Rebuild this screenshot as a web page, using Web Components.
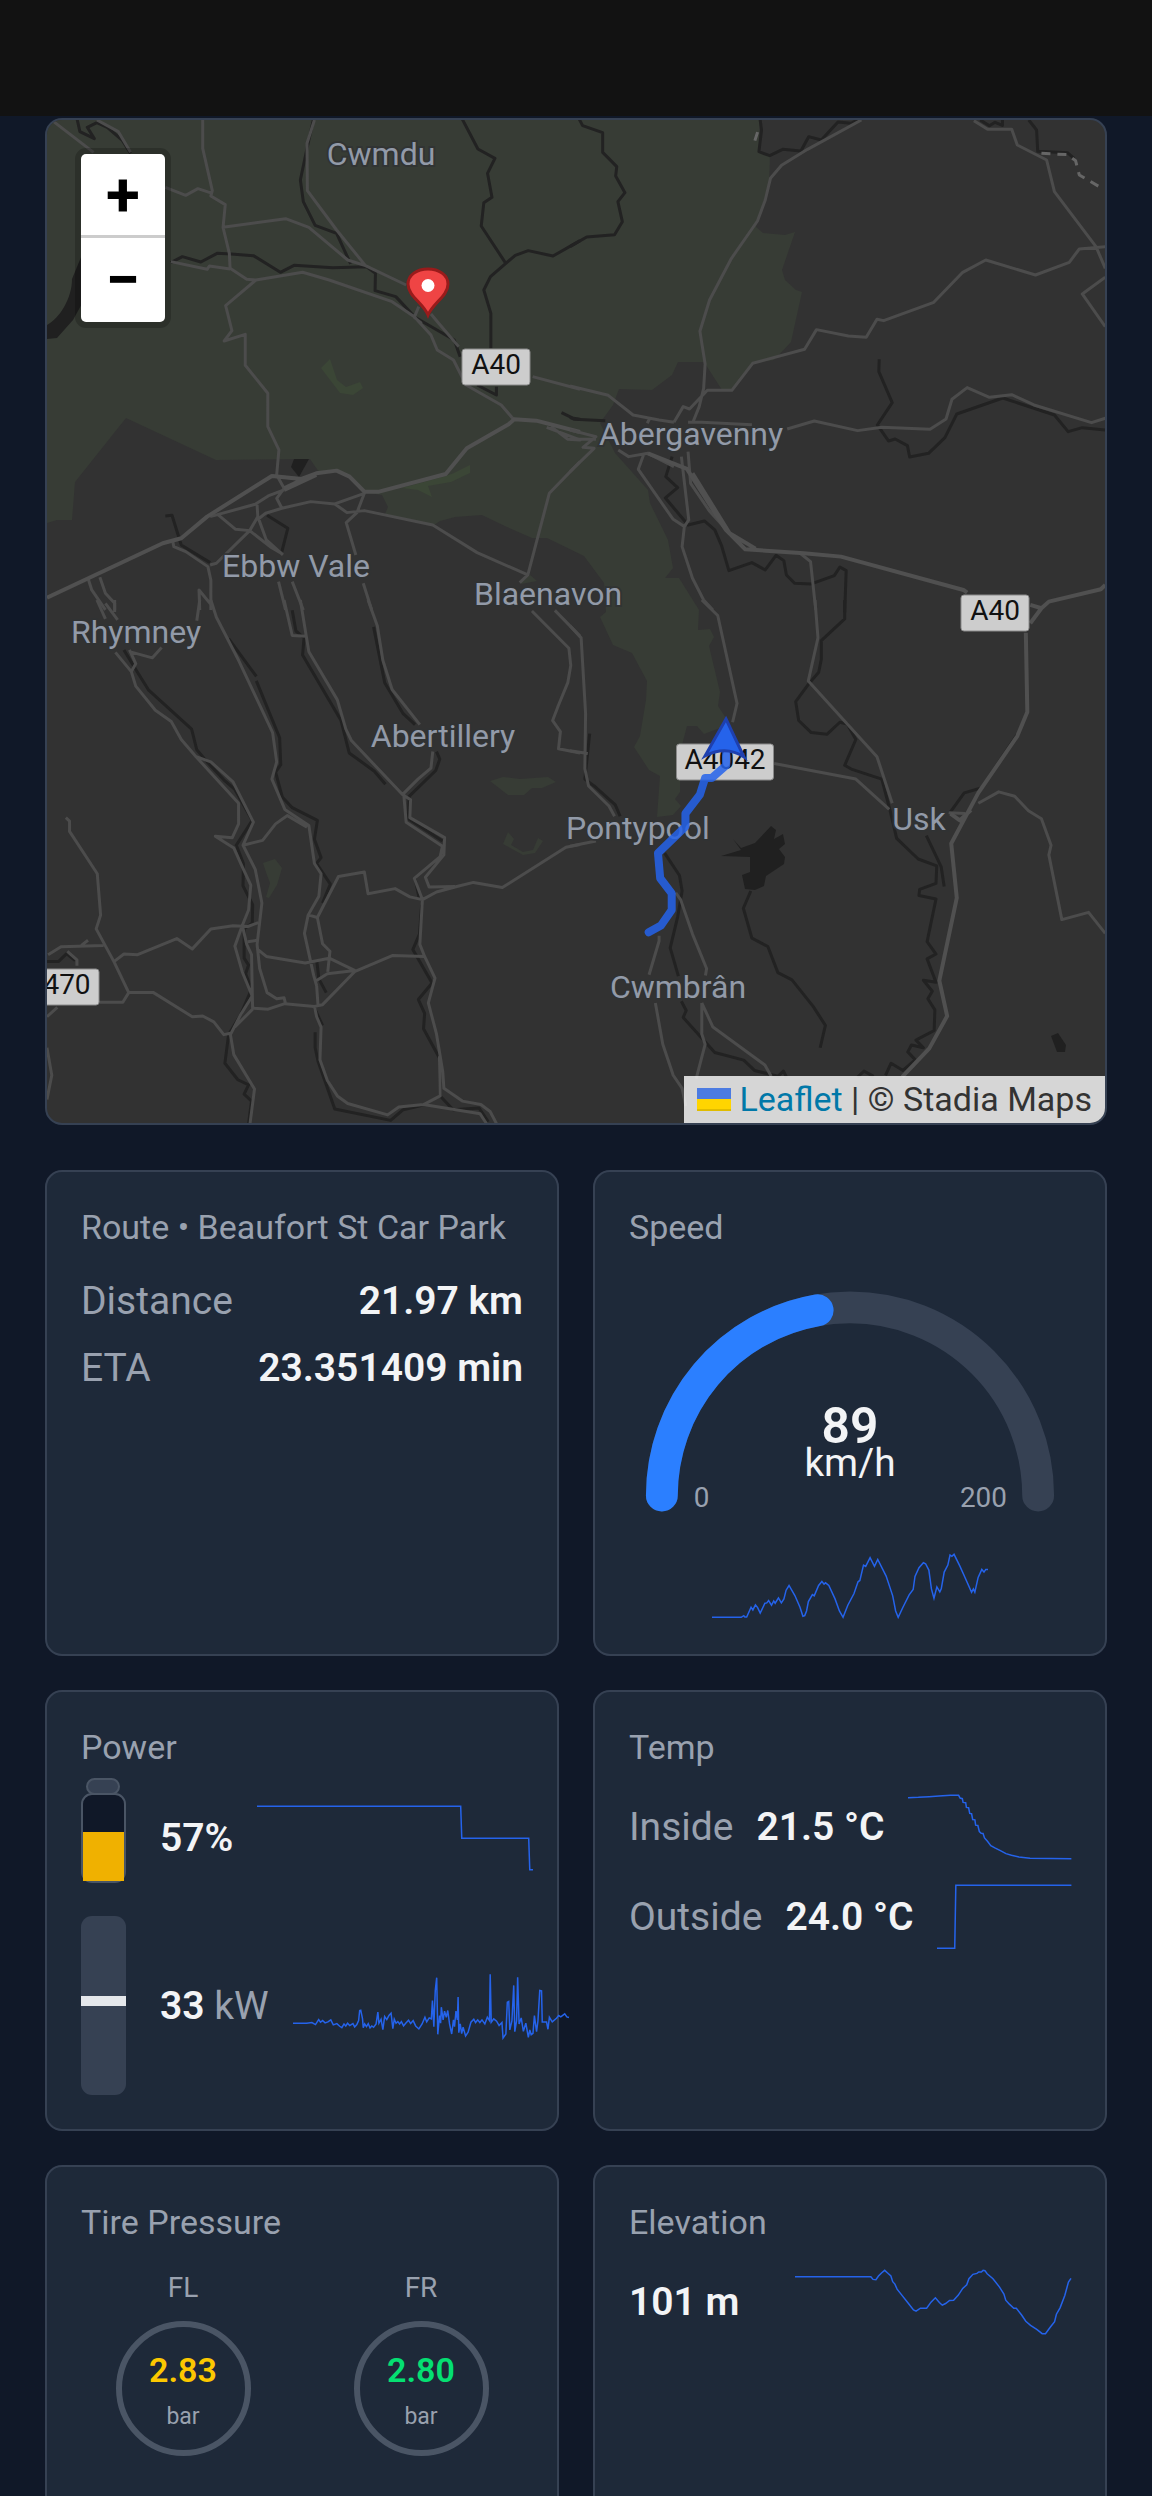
<!DOCTYPE html>
<html lang="en">
<head>
<meta charset="utf-8">
<meta name="viewport" content="width=device-width, initial-scale=1">
<title>Trip dashboard</title>
<style>
  html, body { margin: 0; height: 100%; }
  body {
    background: #101828;
    color: #f3f4f6;
    font: 400 39px/56px Roboto, "Liberation Sans", sans-serif;
    --panel: #1e2939;
    --line: #364153;
    --muted: #99a1af;
    --ring: #4a5565;
  }
</style>
</head>
<body>
<trip-dashboard>
  <route-map slot="map"></route-map>

  <stat-card heading="Route • Beaufort St Car Park">
    <stat-row label="Distance" spread>21.97 km</stat-row>
    <stat-row label="ETA" spread>23.351409 min</stat-row>
  </stat-card>

  <stat-card heading="Speed" wide-gap>
    <speed-gauge value="89" max="200" unit="km/h"></speed-gauge>
    <spark-line centered box="363 1208 756 203" points="363,1403 443,1403 450,1398 453,1402 458,1402 470,1373 475,1381 482,1366 488,1374 495,1390 508,1361 513,1360 518,1353 526,1367 532,1354 536,1361 545,1345 553,1360 560,1348 566,1322 574,1308 590,1338 604,1373 612,1400 617,1398 622,1384 627,1356 638,1335 643,1339 655,1308 664,1296 670,1304 674,1300 683,1308 700,1348 712,1384 722,1403 735,1367 752,1332 763,1297 768,1293 778,1247 784,1251 796,1225 808,1251 817,1230 840,1280 858,1339 866,1384 873,1403 886,1373 903,1336 914,1320 919,1281 930,1255 942,1240 948,1243 957,1262 964,1318 971,1346 979,1312 987,1327 991,1318 999,1268 1009,1247 1015,1217 1020,1221 1026,1215 1042,1250 1056,1284 1074,1328 1079,1318 1083,1328 1092,1284 1102,1260 1108,1268 1113,1260 1119,1260"></spark-line>
  </stat-card>

  <stat-card heading="Power" wide-gap>
    <level-row value="57" unit="%">
      <battery-icon slot="icon" level="57"></battery-icon>
      <spark-line box="637 401 771 203" points="637,408 1206,408 1209,503 1396,503 1399,597 1408,597"></spark-line>
    </level-row>
    <level-row value="33" unit="kW" soft>
      <power-bar slot="icon"></power-bar>
      <spark-line box="737 905 774 203" points="737,1058 775,1058 790,1056 800,1062 809,1047 814,1055 820,1050 827,1057 835,1054 843,1048 850,1063 860,1059 868,1067 874,1071 880,1060 885,1066 890,1058 896,1065 905,1059 910,1069 916,1062 921,1050 924,1020 927,1019 932,1045 934,1071 938,1060 943,1068 948,1059 953,1072 958,1066 963,1070 970,1060 975,1025 978,1058 984,1046 989,1077 994,1038 1000,1047 1006,1035 1012,1028 1017,1074 1021,1046 1026,1058 1031,1053 1036,1060 1041,1053 1047,1066 1053,1058 1061,1049 1067,1059 1074,1050 1081,1066 1090,1075 1099,1060 1107,1040 1112,1054 1119,1042 1125,1045 1128,990 1132,1068 1136,960 1140,922 1143,1091 1148,1035 1151,1058 1153,1010 1158,1048 1162,1022 1167,1040 1171,1020 1176,1060 1182,1090 1187,1048 1190,1068 1194,1022 1198,1048 1200,980 1202,1086 1206,1060 1210,1089 1214,1070 1221,1096 1228,1085 1236,1055 1244,1046 1249,1056 1255,1048 1261,1056 1267,1048 1275,1060 1282,1040 1288,1050 1290,912 1293,1055 1300,1045 1308,1052 1315,1065 1323,1056 1326,1102 1334,1090 1338,995 1342,993 1345,1078 1351,1050 1356,945 1359,1083 1364,1050 1367,921 1371,1060 1377,1042 1383,1082 1390,1058 1397,1100 1401,1078 1405,1092 1410,1088 1414,1035 1420,1083 1424,1050 1429,960 1434,961 1436,1054 1448,1054 1452,1076 1456,1040 1464,1054 1476,1043 1482,1035 1488,1039 1499,1030 1505,1039 1511,1041"></spark-line>
    </level-row>
  </stat-card>

  <stat-card heading="Temp" wide-gap>
    <stat-row label="Inside">21.5 °C
      <spark-line slot="chart" fit box="900 367 442 203" points="900,381 928,380 957,378 984,376 1015,374 1037,374 1041,382 1047,384 1049,395 1056,396 1058,410 1064,411 1067,428 1072,429 1075,446 1081,447 1083,463 1089,464 1093,482 1098,487 1103,488 1107,501 1115,511 1124,524 1135,531 1150,539 1165,548 1180,553 1200,558 1230,562 1342,563"></spark-line>
    </stat-row>
    <stat-row label="Outside">24.0 °C
      <spark-line slot="chart" fit box="981 637 364 203" points="981,832 1029,832 1032,644 1345,644"></spark-line>
    </stat-row>
  </stat-card>

  <stat-card heading="Tire Pressure">
    <tire-grid>
      <tire-gauge corner="FL" value="2.83" unit="bar" style="--tone:#fcc800"></tire-gauge>
      <tire-gauge corner="FR" value="2.80" unit="bar" style="--tone:#05df72"></tire-gauge>
    </tire-grid>
  </stat-card>

  <stat-card heading="Elevation">
    <stat-row reverse>101 m
      <spark-line slot="chart" box="584 383 757 203" points="584,409 792,409 798,417 806,418 813,407 822,397 830,390 838,398 847,407 852,424 858,431 864,446 877,464 893,486 909,508 916,512 928,503 945,503 957,485 969,472 980,486 988,494 997,489 1008,480 1019,479 1032,464 1044,444 1055,433 1061,415 1072,402 1083,399 1088,395 1095,395 1100,390 1105,391 1111,400 1127,415 1145,440 1157,461 1162,479 1172,491 1184,503 1191,503 1206,524 1217,542 1230,554 1247,566 1262,579 1271,579 1284,560 1296,543 1301,521 1311,502 1324,465 1334,425 1341,414"></spark-line>
    </stat-row>
  </stat-card>
</trip-dashboard>

<script>
class ShadowElement extends HTMLElement {
  connectedCallback() {
    if (this.shadowRoot) return;
    this.attachShadow({ mode: "open" }).innerHTML = this.view();
  }
  get(name) { return this.getAttribute(name) || ""; }
}

customElements.define("trip-dashboard", class extends ShadowElement {
  view() {
    return `<style>
      :host { display: flex; flex-direction: column; height: 100vh; overflow: hidden; }
      header { flex: none; height: 116px; background: #121212; }
      main { flex: 1; min-height: 0; overflow: hidden; padding: 2px 45px 0; }
      .cards { display: grid; grid-template-columns: repeat(2, minmax(0, 1fr)); grid-auto-rows: auto; gap: 34px; margin-top: 45px; }
    </style>
    <header></header>
    <main><slot name="map"></slot><div class="cards"><slot></slot></div></main>`;
  }
});

customElements.define("stat-card", class extends ShadowElement {
  view() {
    return `<style>
      :host { display: block; box-sizing: border-box; min-width: 0; min-height: 440px; padding: 34px; border: 2px solid var(--line); border-radius: 17px; background: var(--panel); }
      h2 { margin: 0 0 24px; font-size: 34px; line-height: 43px; font-weight: 400; color: var(--muted); white-space: nowrap; }
      .body { display: flex; flex-direction: column; gap: 11px; }
      :host([wide-gap]) .body { gap: 22px; }
      :host([heading="Power"]) .body { gap: 33px; }
    </style>
    <h2>${this.get("heading")}</h2><div class="body"><slot></slot></div>`;
  }
});

customElements.define("stat-row", class extends ShadowElement {
  view() {
    const label = this.get("label");
    return `<style>
      :host { display: flex; align-items: center; gap: 23px; white-space: nowrap; }
      :host([spread]), :host([reverse]) { justify-content: space-between; }
      .label { color: var(--muted); }
      .value { font-weight: 600; }
    </style>
    ${label ? `<span class="label">${label}</span>` : ""}<span class="value"><slot></slot></span><slot name="chart"></slot>`;
  }
});

customElements.define("spark-line", class extends ShadowElement {
  view() {
    return `<style>
      :host { display: block; flex: none; width: 276px; height: 68px; }
      :host([fit]) { flex: 1 1 0; width: auto; min-width: 0; }
      :host([centered]) { align-self: center; }
      svg { display: block; width: 100%; height: 100%; overflow: visible; }
      polyline { fill: none; stroke: #2563eb; stroke-width: 1.5; vector-effect: non-scaling-stroke; }
    </style>
    <svg viewBox="${this.get("box")}" preserveAspectRatio="none" aria-hidden="true"><polyline points="${this.get("points")}"/></svg>`;
  }
});

customElements.define("speed-gauge", class extends ShadowElement {
  view() {
    const value = +this.get("value"), max = +this.get("max"), r = 189;
    const a = Math.PI * value / max;
    const x = 222 - r * Math.cos(a), y = 223 - r * Math.sin(a);
    return `<style>
      :host { display: block; }
      svg { display: block; width: 100%; height: 257px; }
      path { fill: none; stroke-width: 32; stroke-linecap: round; }
      text { text-anchor: middle; fill: #f3f4f6; }
      .value { font-size: 50px; font-weight: 600; }
      .unit { font-size: 39px; }
      .end { font-size: 28px; fill: var(--muted); }
    </style>
    <svg viewBox="0 0 444 257" role="img" aria-label="Speed">
      <path stroke="#364153" d="M33 223A189 189 0 0 1 411 223"/>
      <path stroke="#2b7fff" d="M33 223A189 189 0 0 1 ${x} ${y}"/>
      <text class="value" x="222" y="170">${value}</text>
      <text class="unit" x="222" y="203">${this.get("unit")}</text>
      <text class="end" x="73" y="234">0</text>
      <text class="end" x="356" y="234">${max}</text>
    </svg>`;
  }
});

customElements.define("level-row", class extends ShadowElement {
  view() {
    const soft = this.hasAttribute("soft");
    return `<style>
      :host { display: flex; align-items: center; gap: 34px; white-space: nowrap; }
      .reading { display: flex; align-items: center; gap: 24px; }
      b { font-weight: 600; }
      span { color: var(--muted); }
    </style>
    <slot name="icon"></slot>
    <div class="reading"><div>${soft
      ? `<b>${this.get("value")}</b> <span>${this.get("unit")}</span>`
      : `<b>${this.get("value")}${this.get("unit")}</b>`}</div><slot></slot></div>`;
  }
});

customElements.define("battery-icon", class extends ShadowElement {
  view() {
    return `<style>
      :host { display: block; position: relative; box-sizing: border-box; flex: none; width: 45px; height: 90px; }
      .nub { position: absolute; box-sizing: border-box; top: -15px; left: 5px; width: 34px; height: 17px; border: 2px solid var(--ring); border-radius: 9px; background: var(--line); }
      .cell { position: relative; box-sizing: border-box; display: flex; align-items: flex-end; height: 100%; border: 2px solid var(--ring); border-radius: 11px; background: #101828; }
      .fill { width: 100%; height: ${this.get("level")}%; background: #f0b100; }
    </style>
    <div class="nub"></div><div class="cell"><div class="fill"></div></div>`;
  }
});

customElements.define("power-bar", class extends ShadowElement {
  view() {
    return `<style>
      :host { display: flex; flex: none; box-sizing: border-box; width: 45px; height: 179px; padding-top: 80px; border-radius: 11px; background: var(--line); }
      i { display: block; width: 100%; height: 10px; background: #e5e7eb; }
    </style><i></i>`;
  }
});

customElements.define("tire-grid", class extends ShadowElement {
  view() {
    return `<style>:host { display: grid; grid-template-columns: 1fr 1fr; gap: 34px; }</style><slot></slot>`;
  }
});

customElements.define("tire-gauge", class extends ShadowElement {
  view() {
    return `<style>
      :host { display: flex; flex-direction: column; align-items: center; gap: 14px; color: var(--muted); }
      .corner { font-size: 28px; line-height: 39px; }
      .ring { display: flex; flex-direction: column; align-items: center; justify-content: center; gap: 7px; box-sizing: border-box; width: 135px; height: 135px; padding-top: 4px; border: 6px solid var(--ring); border-radius: 50%; }
      b { font-size: 34px; line-height: 45px; font-weight: 600; color: var(--tone); }
      small { font-size: 23px; line-height: 34px; }
    </style>
    <div class="corner">${this.get("corner")}</div>
    <div class="ring"><b>${this.get("value")}</b><small>${this.get("unit")}</small></div>`;
  }
});

customElements.define("route-map", class extends ShadowElement {
  view() {
    const places = [
      ["Cwmdu", 381, 165], ["Ebbw Vale", 296, 577], ["Blaenavon", 548, 605], ["Abergavenny", 691, 445],
      ["Rhymney", 136, 643], ["Abertillery", 443, 747], ["Pontypool", 638, 839], ["Usk", 919, 830], ["Cwmbrân", 678, 998]
    ];
    const shields = [["A40", 496, 367, 68], ["A40", 995, 613, 68], ["A4042", 725, 762, 97], ["470", 67, 987, 64]];
    return `<style>
      :host { display: block; position: relative; box-sizing: border-box; height: 1007px; border: 2px solid #364153; border-radius: 17px; overflow: hidden; background: #323232; }
      .tiles { display: block; width: 100%; height: 100%; }
      .water path, .road path { fill: none; vector-effect: non-scaling-stroke; stroke-linejoin: round; }
      .water path { stroke: #222; stroke-width: 3; }
      .road path { stroke: #4c4c4c; stroke-width: 3; }
      .road .main { stroke: #505050; stroke-width: 4; }
      .road .dash { stroke: #666; stroke-dasharray: 9 7; }
      text { text-anchor: middle; }
      .place { font-size: 32px; fill: #929aa8; stroke: #303234; stroke-width: 4; stroke-opacity: .8; paint-order: stroke; }
      .shield { font-size: 28px; fill: #111; }
      .zoom { position: absolute; top: 28px; left: 28px; display: flex; flex-direction: column; border: 6px solid rgba(0,0,0,.2); border-radius: 11px; background-clip: padding-box; }
      button { box-sizing: border-box; width: 84px; height: 84px; margin: 0; padding: 0; border: 0; background: #fff; color: #000; font: 700 62px/84px Roboto, sans-serif; }
      button:first-child { line-height: 78px; border-bottom: 3px solid #ccc; border-radius: 5px 5px 0 0; }
      button:last-child { border-radius: 0 0 5px 5px; }
      .credit { position: absolute; right: 0; bottom: 0; display: flex; align-items: center; height: 47px; padding: 0 13px; background: rgba(255,255,255,.8); color: #333; font-size: 34px; line-height: 47px; white-space: pre; }
      a { display: flex; align-items: center; gap: 8px; color: #0078a8; text-decoration: none; }
      a svg { width: 34px; height: 23px; }
    </style>
    <svg class="tiles" viewBox="47 120 1058 1003" preserveAspectRatio="xMidYMid slice" role="img" aria-label="Map of the route">
      <path fill="#373c35" d="M40 110V525L57 520 72 520 75 482 126 418 216 460 310 459 319 472 335 470 350 478 362 492 382 495 388 507 385 514 434 525 440 521 455 517 482 515 507 527 532 538 547 538 584 556 604 583 606 612 600 617 613 645 632 653 647 681 646 700 640 736 634 747 649 770 660 776 657 817 673 815 681 806 675 799 680 792 680 770 676 768 687 726 697 726 704 734 720 728 726 718 718 706 720 692 709 646 714 637 710 629 698 630 699 610 679 578 665 578 673 568 668 540 650 503 648 490 615 453 600 423 613 405 619 389 652 390 672 375 678 362 704 362 722 390 732 390 753 363 774 360 791 342 802 292 796 290 785 280 782 270 795 232 785 235 763 233 756 227 769 183 770 156 759 152 760 110Z"/>
      <g fill="#3b4636"><path d="M321 368L330 359 337 380 346 387 360 382 363 388 353 395 340 393Z"/><path d="M402 488L446 476 454 473 470 465 470 473 451 482 428 486 432 497 418 490Z"/></g>
      <g fill="#373c35"><path d="M490 781L503 777 520 779 548 777 556 782 542 788 532 788 524 795 508 795Z"/><path d="M508 832L514 839 511 845 523 852 533 850 538 838 543 841 535 853 523 855 503 844Z"/><path d="M263 863L275 859 282 868 277 885 269 898 266 897 270 883 267 875Z"/><path d="M521 582L530 575 537 581 521 584Z"/></g>

      <g fill="#202020"><path d="M294 459H309L299 477 291 467Z"/>
        <path d="M47 339V325C60 318 72 298 72 279L84 250V300L73 320 57 338Z"/>
        <path d="M721 856L741 850 733 839 741 848 755 843 771 826 776 830 774 839 783 834 785 844 779 849 785 857 784 864 766 876 764 886 755 890 745 889 742 875 750 872 750 857Z"/>
        <path d="M1051 1036L1058 1033 1066 1045 1065 1052 1057 1052Z"/></g>

      <g class="water">
        <g transform="translate(0 90) scale(.3699 .3333)">
          <path stroke-width="5" d="M208 85L216 125 255 146 236 112 262 98 290 112 330 150 353 190"/>
          <path d="M848 85L832 165 812 270 820 335 852 406 910 430 948 522M1250 88L1292 177 1338 205 1318 250 1330 322 1308 338 1301 408 1366 518M1568 452L1495 498 1428 482 1393 496 1326 560 1308 600 1327 670V775M462 518L493 500 543 516 587 490 625 492 685 497 758 547 795 526 900 533 990 530 1015 550 1014 602 1070 620 1122 682 1228 750 1244 800M1290 885L1342 915V890M1518 968L1550 985 1568 988M447 1278L465 1276 490 1365 568 1418M722 1276L778 1315 762 1385"/>
        </g>
        <g transform="translate(570 90) scale(.3712 .3333)">
          <path d="M25 88L34 107 88 128V187L126 230 123 258 148 308 129 335 141 395 120 434 45 441 0 470M512 88L516 120 509 185 538 197 573 178 622 183 643 140 677 150 722 96 757 100 775 90M1105 90L1130 107 1145 97 1165 106V90M1236 90L1257 120 1260 184 1340 188 1358 205M0 982L12 988 95 992M833 808L832 845 868 938 828 1005 858 1053 876 1047 909 1067 915 1101 966 1090 1010 1043 1042 972 1166 924 1305 975 1342 1025 1380 1013 1442 1020M275 1100L258 1160 290 1193 257 1224 318 1305 362 1293 390 1320 408 1366 428 1442 490 1418 526 1440 555 1396 576 1412 583 1455 605 1480 650 1482 712 1457 727 1431 744 1442 740 1568"/>
        </g>
        <g transform="translate(0 600) scale(.3699 .3444)">
          <path d="M335 145L365 198 402 262 518 375 532 435 560 470 605 522 635 550 682 640 637 715M618 112L693 222M693 235L756 400 759 478 745 500 763 572 790 603 858 640 850 695 868 748 856 765 893 825 872 880M790 30L800 90 822 110 818 160 922 350 944 444 1012 497 1042 535M1010 78L1040 240 1090 330 1122 362M1180 440L1189 462 1178 495 1106 570 1104 635 1196 700M640 715L658 765 657 830 683 885 682 938 660 955 660 1040 672 1060 664 1085 680 1130 650 1205 618 1262 608 1345 643 1393 672 1408 660 1435 680 1455 672 1520M1122 808L1134 870M1140 885L1134 970 1116 1015 1168 1112 1131 1160 1148 1200 1145 1245 1188 1330 1190 1440 1225 1480 1295 1475 1320 1515M850 1185L872 1235M852 1255V1300L860 1340 905 1478 1056 1511 1090 1480 1150 1465M856 1045L862 1100 882 1140M127 1050H158L180 1027 203 1047"/>
        </g>
        <g transform="translate(570 600) scale(.3712 .3444)">
          <path d="M740 0V55L677 118V172L670 210 642 245 608 295 616 350 650 385 692 390 727 355 747 360 770 405 740 480 760 492 840 520 862 610 880 692 938 752 988 772 986 823 942 840 940 858 986 868 962 992 986 1028 962 1042 986 1110 952 1104 976 1136 964 1158 983 1190 981 1250 932 1278 952 1300 920 1292 910 1312 930 1335 897 1366 865 1345 850 1380M960 684L1000 775 1008 832M1110 545L1062 560 1025 615M1205 390L1107 548M487 845L467 895 490 982 533 1006 560 1082 598 1103 655 1180 688 1235 674 1300M255 735L295 800 302 845 290 920 270 1010 292 1092M300 1165L313 1192 305 1212 390 1314 468 1336 497 1366 560 1383 575 1368 583 1385M775 1385L792 1368 818 1383M53 388L40 520 65 540 122 595 135 628"/>
        </g>
      </g>

      <g class="road">
        <g transform="translate(0 90) scale(.3699 .3333)">
          <path d="M145 95L253 187M262 90L320 125 353 187M548 90V175L574 302 570 318 609 344 603 412 620 490 622 535 667 568 692 570M447 292L502 316 535 296 574 310M603 412L772 386 835 412 940 510 988 527 1098 585M850 90L830 160 831 302 910 420 988 527M462 515L560 538 566 528 622 537M692 570L818 547 890 570 1060 635 1120 680 1165 735 1182 780 1226 810 1260 885 1355 945 1390 990M692 570L610 647 627 722 606 753 663 733V826L724 910V1010L754 1080 748 1155 768 1195 748 1225 762 1255M1165 672L1190 705 1240 770M1132 650L1120 682 1140 700M1440 860L1568 898M1478 1012L1568 1050 1535 1048 1490 1010M1568 1115L1485 1210 1427 1455 1405 1478M735 1158L815 1167M762 1255L840 1235 905 1242 938 1268 985 1262 1170 1305 1290 1388 1427 1455M905 1242L985 1210 965 1268 936 1298 962 1395M568 1280L690 1243 725 1218 768 1200M695 1245L697 1280 675 1322 637 1318 590 1275M675 1322L585 1420 568 1425M697 1280L720 1350 765 1395M695 1290L718 1270 762 1255M675 1322L730 1370 760 1390M467 1355L470 1370 502 1385 562 1430 570 1470V1560M238 1465L248 1500 285 1560M270 1462L285 1510 310 1540V1560M540 1560L538 1500 575 1550M753 1475L772 1560M790 1475L820 1560M982 1480L1005 1560"/>
          <path class="main" d="M127 1523L440 1360 490 1345 560 1280 735 1158 815 1167 855 1150 910 1142 945 1160 985 1205 1025 1205 1205 1152 1262 1075 1375 1003 1390 988 1450 992 1568 1026M768 1200L855 1155M768 1195L815 1170"/>
        </g>
        <g transform="translate(570 90) scale(.3712 .3333)">
          <path d="M785 90L640 178 570 226 540 265 526 330 505 393 435 505 376 630 350 724 364 822 360 895 348 950 330 1000M1088 92L1125 118H1190L1205 165 1284 210 1305 305 1417 470 1442 535M1442 470L1372 477 1345 517 1254 555 1120 510 1058 547 980 637 845 692 827 688 798 742 750 738 664 719 632 778 492 820 436 901H370L322 957 305 950 280 997M0 888L103 916 170 975 240 990 280 997M240 990L215 985 208 1000M1442 562L1380 612 1442 710M318 997H355L490 1004M585 1017L658 993 775 1022 840 1012 970 1018 1013 987 1029 928 1070 893 1130 922 1190 914 1250 945 1405 998 1442 985M0 1020L70 1040 35 1072 65 1075 0 1145M0 1048H70M130 1080L158 1100 210 1090 280 1130M198 1095L184 1138 277 1287 308 1310 302 1370 330 1465 360 1530 385 1560M300 1100L320 1290 308 1310M318 1085L325 1180 375 1262 430 1330M620 1390L648 1415 662 1560"/>
          <path class="main" d="M210 1090L315 1137 420 1320 472 1378 630 1390 730 1400 1060 1500 1070 1508M1240 1545L1270 1555 1290 1535 1430 1498 1442 1485M1270 1555L1240 1600M330 1150L430 1330 500 1376"/>
          <path class="dash" d="M498 152L510 110M1270 190L1340 194 1362 212 1372 255 1432 294"/>
        </g>
        <g transform="translate(0 600) scale(.3699 .3444)">
          <path d="M262 0L285 55M285 10L318 58M310 0V35M540 0L532 60M570 0L585 50 645 175 737 385 748 470 735 520 770 608 835 655 850 765 868 795 862 860 833 915 823 968 848 1090 856 1120M312 152L355 208 367 250 420 320 463 353 490 405 530 455 645 590V650L628 690 582 686 632 720 655 775 678 828 672 900 655 945 635 1005 655 1080 682 1150 650 1205 623 1262 632 1320 688 1420 676 1520M350 145L367 185 355 208M350 150L412 168 437 138M530 455L570 470 630 528 685 645 657 712 710 698 745 650 777 626 830 660M657 712L690 782 708 880 695 1000 702 1070 722 1140 748 1158 768 1155 772 1172M768 0L790 103 828 105 812 0M828 105L835 150 912 290 935 375 950 408 1088 565 1110 580 1108 632 1202 690 1200 740 1150 805 1160 833 1230 832M1088 565L1130 520 1165 488 1170 440M1092 570L1098 645 1196 715 1190 745 1120 808 1142 870 1135 1000 1148 1035 1176 1098 1158 1170 1180 1260 1197 1370 1200 1418 1250 1455 1300 1465 1325 1485 1342 1520M995 0L1020 75 1035 175 1060 260 1135 362M1142 870L1180 848 1235 832 1280 820 1358 835 1530 718 1568 710M1142 870L1108 862 1068 838 995 853 985 790 915 803 858 922 835 915M858 922L872 998 892 1020 886 1080M1438 32L1538 140 1543 190 1535 240 1510 305 1494 350 1515 382 1510 432 1568 444M1500 30L1568 105M178 632L188 642V672L263 795 272 915 260 955 308 1050 348 1140 332 1168H265M130 1030L165 1007 280 1003M220 1003L238 988M182 1020L208 1045V1062M308 1050L335 1028 372 1030 478 983 520 1013 570 955 630 946 670 948 698 937M670 992L695 988M655 945L667 1000 680 1030 683 1190M695 1013L720 1035 825 1054 890 1040 960 1076 885 1085 856 1105M350 1140H415L520 1210 548 1208 578 1225 605 1262 623 1258M682 1185L725 1188 770 1172 850 1180 872 1175 960 1078 1062 1032 1148 1035M683 1188L635 1240M850 1180L856 1210 868 1240 865 1335 885 1395 912 1440 940 1462 1048 1495 1078 1472 1145 1465 1190 1440 1188 1325M1145 1465L1298 1492 1315 1520M127 1210L155 1183M127 1300L140 1380 127 1450M856 1120L860 1180"/>
        </g>
        <g transform="translate(570 600) scale(.3712 .3444)">
          <path d="M355 0L398 45 450 300 438 355M660 0L668 110 642 235 827 455 868 590M550 475L770 520 860 608M0 75L30 110 42 330 40 490 50 540 105 598 120 628M0 438L48 446M0 715L70 700M285 850L298 870 330 970 368 1070 365 1090M240 975V990L213 1088M230 1170L250 1290 278 1380 302 1418 312 1470M355 1170V1260L364 1290 340 1390M355 1170L385 1240 525 1350 542 1383M1100 590L1155 557 1198 570 1235 612 1270 635 1296 712 1290 740 1325 928 1397 907 1442 968M1020 618L1065 620"/>
          <path class="main" d="M1228 95L1232 325 1205 395 1100 560 1027 707 1042 865 995 1105 1016 1208 968 1302 895 1385M1025 620L1050 640 1080 610"/>
        </g>
      </g>

      ${places.map(([n, x, y]) => `<text class="place" x="${x}" y="${y}">${n}</text>`).join("")}
      ${shields.map(([n, x, y, w]) => `<rect x="${x - w / 2}" y="${y - 18}" width="${w}" height="36" rx="3" fill="#cdcdcd" stroke="#8a8a8a"/><text class="shield" x="${x}" y="${y + 7}">${n}</text>`).join("")}

      <g transform="translate(570 600) scale(.3712 .3444)">
        <path fill="none" stroke="#2563eb" stroke-opacity=".85" stroke-width="8" stroke-linecap="round" stroke-linejoin="round" vector-effect="non-scaling-stroke" d="M421 430V480L382 517H364L350 565 311 620V658L237 735 243 808 274 852V900L245 945 212 965"/>
      </g>
      <path fill="#2563eb" stroke="#1e40af" stroke-width="3" d="M726 719L744 757Q726 745 705 756Z"/>
      <path fill="#ef4444" stroke="#991b1b" stroke-width="3" d="M428 315C423 303 408 296 408 284C408 275 417 269 428 269S448 275 448 284C448 296 433 303 428 315Z"/>
      <circle cx="428" cy="285.500" r="6.500" fill="#fff"/>
    </svg>
    <div class="zoom"><button type="button" aria-label="Zoom in">+</button><button type="button" aria-label="Zoom out">−</button></div>
    <div class="credit"><a href="#leaflet"><svg viewBox="0 0 34 23" aria-hidden="true"><path fill="#4c7be1" d="M0 0h34v12H0z"/><path fill="#ffd500" d="M0 11h34v12H0z"/><path fill="#e0bc00" d="M0 21h34v2H0z"/></svg>Leaflet</a><span> | © Stadia Maps</span></div>`;
  }
});
</script>
</body>
</html>
